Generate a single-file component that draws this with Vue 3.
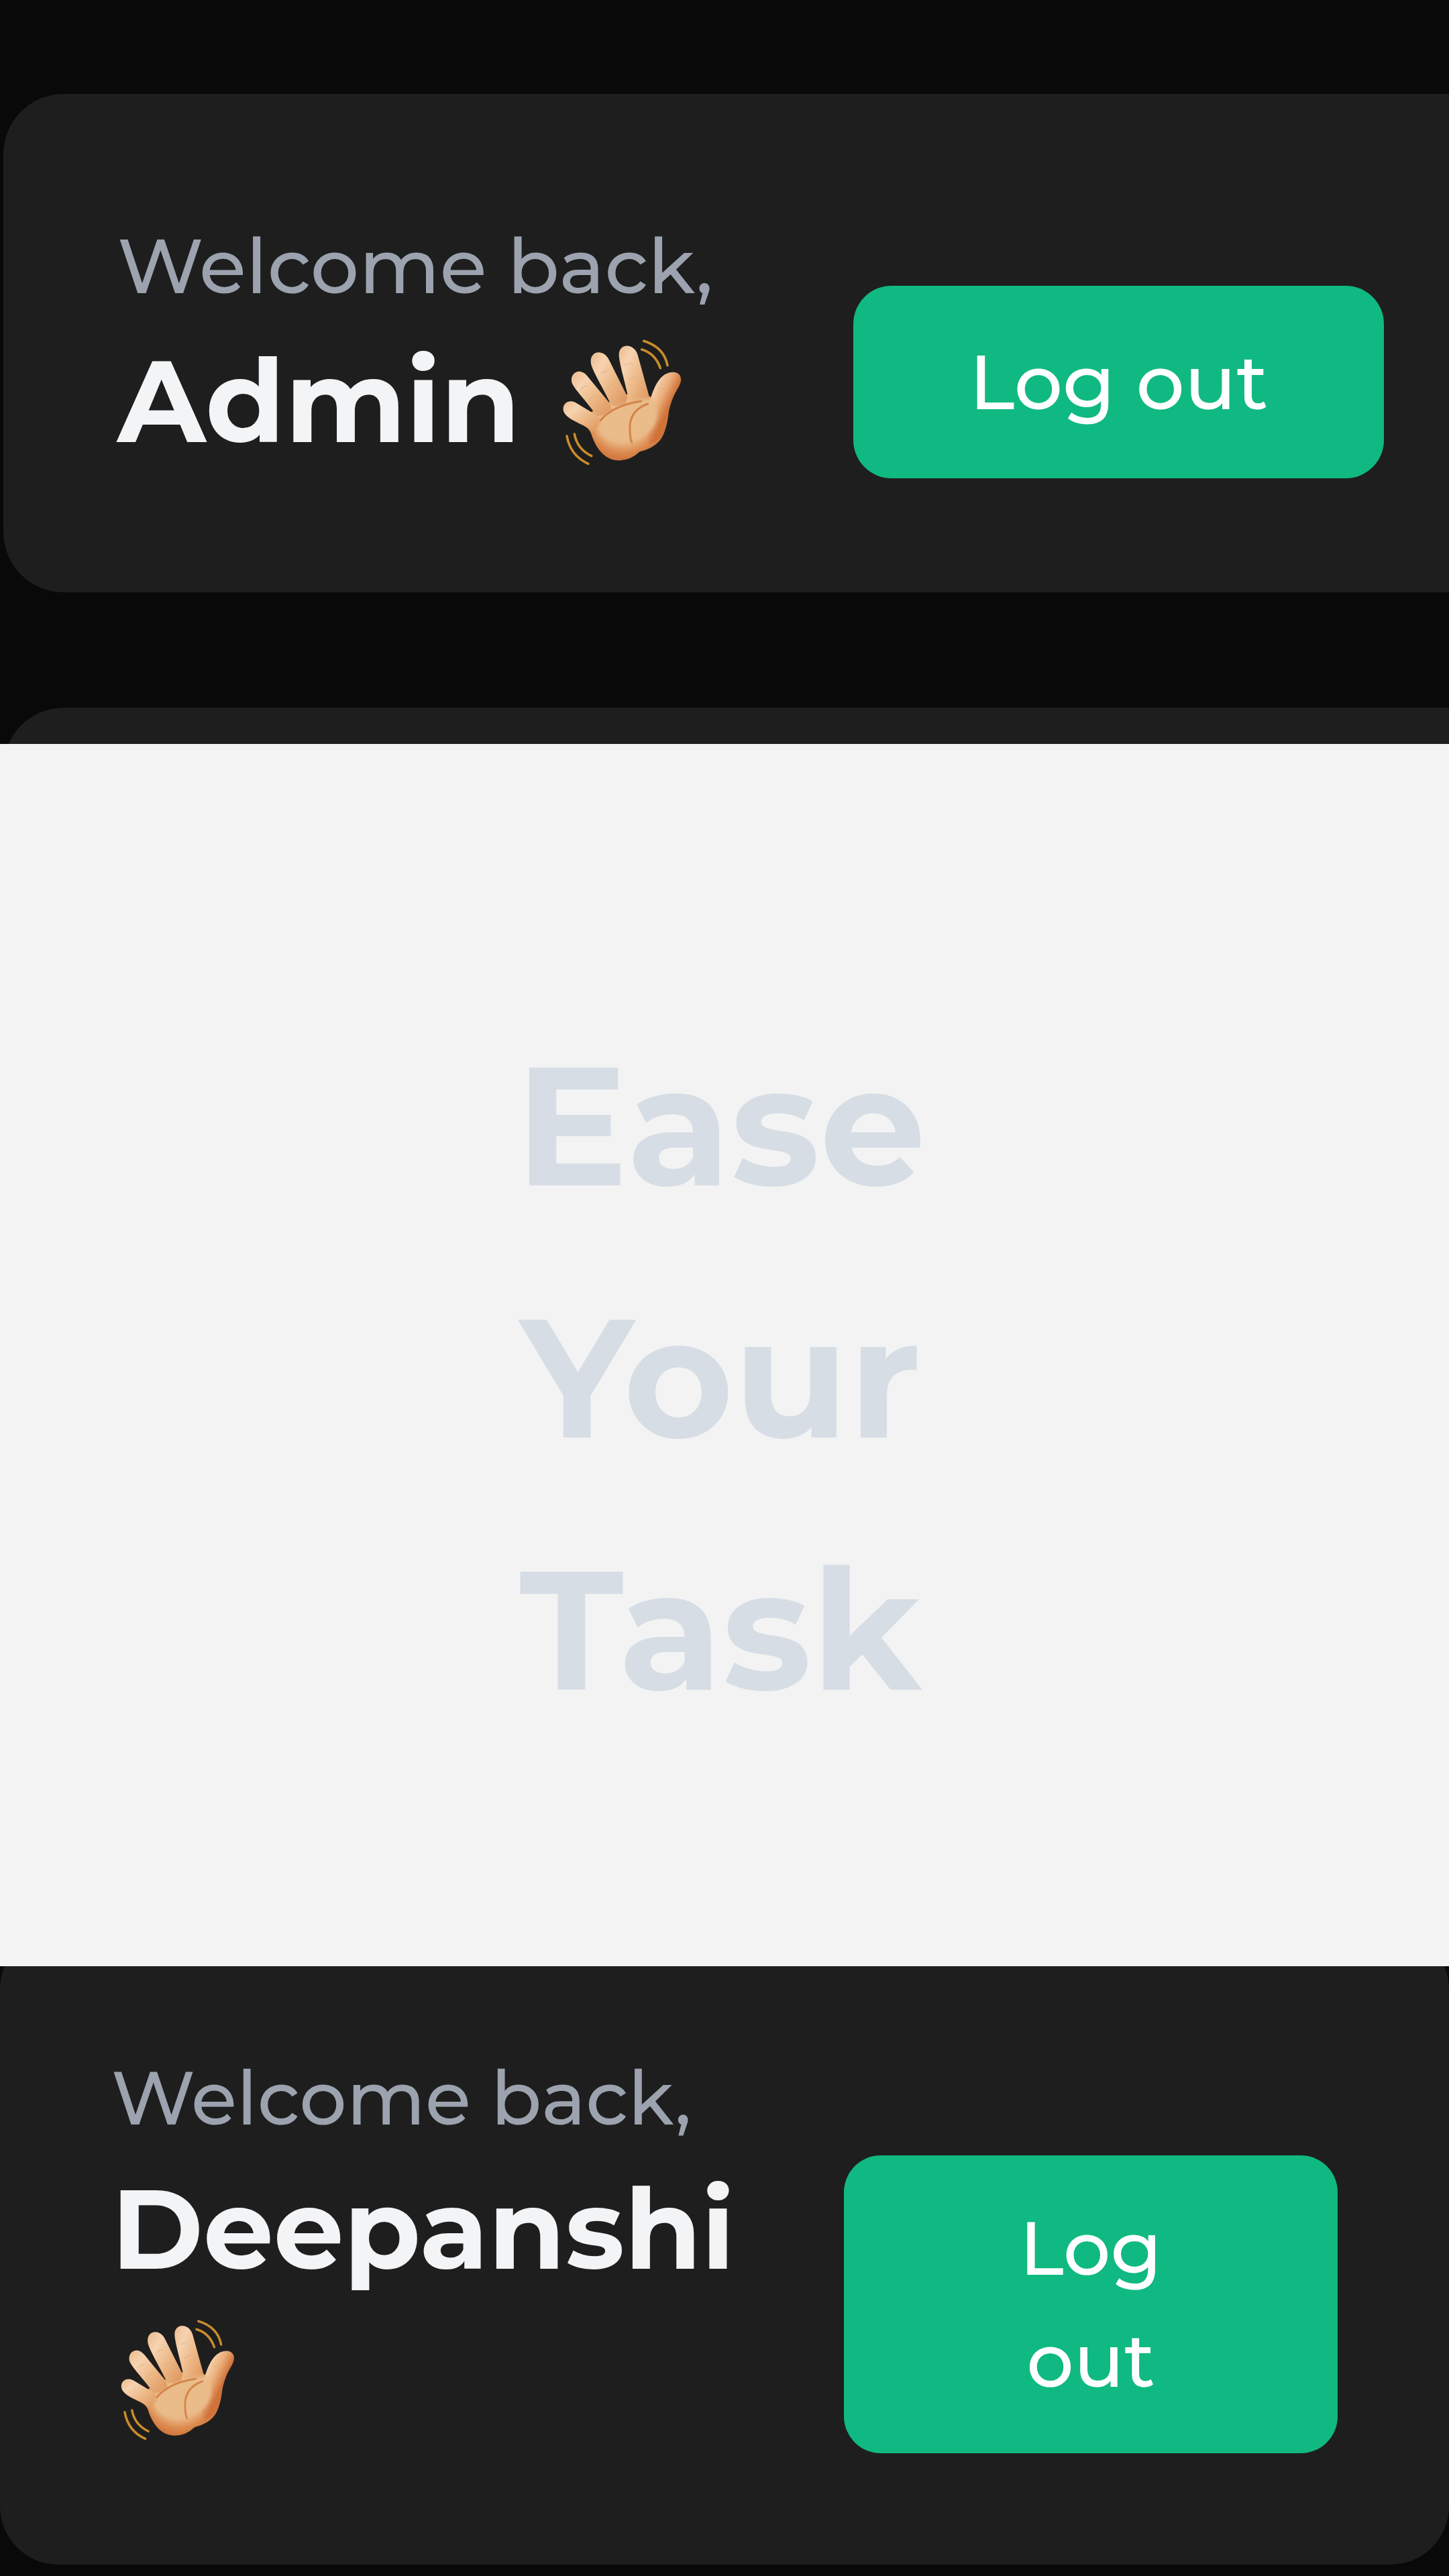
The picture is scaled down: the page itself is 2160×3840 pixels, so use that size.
<script setup>
const words = ['Ease', 'Your', 'Task']
const panels = [
  { id: 'admin', name: 'Admin' },
  { id: 'member', name: 'Deepanshi' },
]
</script>

<template>
  <svg class="defs" aria-hidden="true">
    <defs>
      <linearGradient id="finger" x1="0" y1="0.1" x2="0.9" y2="0.9">
        <stop offset="0" stop-color="#eebf94" />
        <stop offset="0.25" stop-color="#f6d3b0" />
        <stop offset="0.6" stop-color="#edb988" />
        <stop offset="1" stop-color="#e09a62" />
      </linearGradient>
      <linearGradient id="thumb" gradientUnits="userSpaceOnUse" x1="465" y1="260" x2="550" y2="300">
        <stop offset="0" stop-color="#f6d0aa" />
        <stop offset="0.5" stop-color="#ebae7a" />
        <stop offset="1" stop-color="#d0733a" />
      </linearGradient>
      <radialGradient id="palm" gradientUnits="userSpaceOnUse" cx="325" cy="390" r="205">
        <stop offset="0" stop-color="#edc596" />
        <stop offset="0.6" stop-color="#e8b27d" />
        <stop offset="0.8" stop-color="#dc894e" />
        <stop offset="1" stop-color="#cb7038" />
      </radialGradient>
      <filter id="soft" x="-20%" y="-20%" width="140%" height="140%">
        <feGaussianBlur stdDeviation="8" />
      </filter>
      <symbol id="wave" viewBox="48 40 540 570">
        <g fill="none" stroke="#c98c2c" stroke-width="11" stroke-linecap="round">
          <path d="M416 53Q506 80 522 162" />
          <path d="M407 91Q467 108 490 174" />
          <path d="M72 478Q88 566 168 602" />
          <path d="M106 469Q118 536 182 567" />
        </g>
        <path fill="url(#palm)" d="M178 372L270 322L340 292L440 300L462 310Q505 300 528 362Q524 420 508 460Q488 526 398 548Q350 594 288 586Q222 574 187 486Q178 446 142 424L130 370Z" />
        <path fill="url(#finger)" d="M60 374C44 340 76 310 112 329L200 382L232 420L184 458C164 437 128 423 98 407Q70 391 60 374Z" />
        <path fill="url(#finger)" d="M94 238C84 196 130 168 164 210L264 332L280 382L204 388C180 344 100 264 94 238Z" />
        <path fill="url(#finger)" d="M180 154C170 98 234 84 260 136L342 300L330 350L270 340C250 292 184 184 180 154Z" />
        <path fill="url(#finger)" d="M305 118C302 62 370 60 388 112L440 300L432 350L348 318C340 262 308 164 305 118Z" />
        <path fill="url(#thumb)" d="M446 312C462 260 488 192 548 192C586 194 592 228 568 266C530 326 526 386 508 460Q488 500 440 514L416 400Z" />
        <path fill="#eabc8a" filter="url(#soft)" d="M228 396Q290 328 440 308Q478 326 474 396Q460 470 374 494Q300 522 238 482Q198 440 228 396Z" />
        <g fill="none" stroke="#d4854b" stroke-width="9" stroke-linecap="round">
          <path d="M222 408Q280 340 404 322" />
          <path d="M434 334Q360 360 354 430Q352 480 362 506" />
        </g>
        <g fill="none" stroke="#dea879" stroke-width="4" stroke-linecap="round" opacity="0.5">
          <path d="M134 270Q148 252 164 254M172 318Q184 298 200 298M224 198Q236 186 252 188M256 262Q268 246 284 248M332 162Q350 150 364 154M352 228Q366 212 382 214M482 262Q496 260 510 274" />
        </g>
      </symbol>
    </defs>
  </svg>

  <main>
    <section v-for="(panel, i) in panels" :key="panel.id" class="panel" :class="panel.id">
      <article class="card">
        <div class="greeting">
          <p class="hello">Welcome back,</p>
          <h2 class="name">
            {{ panel.name }}
            <svg class="hand" role="img" aria-label="Waving hand"><use href="#wave" /></svg>
          </h2>
        </div>
        <button class="logout" type="button">Log out</button>
      </article>
      <div v-if="i === 0" class="card next"></div>
    </section>

    <section class="slogan">
      <h1><span v-for="word in words" :key="word">{{ word }}</span></h1>
    </section>
  </main>
</template>

<style>
body {
  margin: 0;
  background: #090909;
}
</style>

<style scoped>
.defs {
  position: absolute;
  width: 0;
  height: 0;
}
main {
  display: flex;
  flex-direction: column;
  font-family: Montserrat, Inter, sans-serif;
}
.panel {
  overflow: hidden;
  background: #090909;
}
.slogan {
  order: 1;
  padding: 381px 12px 313px 0;
  background: #f3f3f3;
  text-align: center;
}
.slogan h1 {
  margin: 0;
  color: #d6dde5;
  font-size: 250px;
  font-weight: 700;
  line-height: 376px;
}
.slogan span {
  display: block;
}
.card {
  display: flex;
  align-items: flex-end;
  justify-content: space-between;
  background: #1e1e1e;
}
.hello,
.name {
  margin: 0;
}
.hello {
  color: #9ca3af;
  font-weight: 500;
}
.name {
  color: #f3f4f6;
  font-weight: 700;
}
.logout {
  flex: none;
  border: 0;
  background: #10b981;
  color: #fff;
  font-family: inherit;
  font-weight: 500;
  text-align: center;
}

.admin {
  padding: 140px 0 0 5px;
}
.admin .card {
  padding: 170px 97px 170px 170px;
  border-radius: 90px 0 0 90px;
}
.admin .next {
  height: 180px;
  margin: 172px 0 -126px;
  padding: 0;
}
.admin .hello,
.admin .logout {
  font-size: 114px;
  line-height: 173px;
}
.admin .name {
  font-size: 172px;
  line-height: 230px;
}
.admin .hand {
  width: 180px;
  height: 190px;
  margin-left: 12px;
  vertical-align: -35px;
}
.admin .logout {
  width: 791px;
  padding: 57px 160px;
  border-radius: 57px;
}

.member {
  order: 2;
  padding-bottom: 17px;
}
.member .card {
  margin-top: -53px;
  padding: 166px;
  border-radius: 87px;
}
.member .hello,
.member .logout {
  font-size: 111px;
  line-height: 167px;
}
.member .name {
  font-size: 166px;
  line-height: 223px;
}
.member .hand {
  width: 173px;
  height: 182px;
  margin-left: 12px;
  vertical-align: -33px;
}
.member .logout {
  width: 736px;
  padding: 55px 170px;
  border-radius: 55px;
}
</style>
